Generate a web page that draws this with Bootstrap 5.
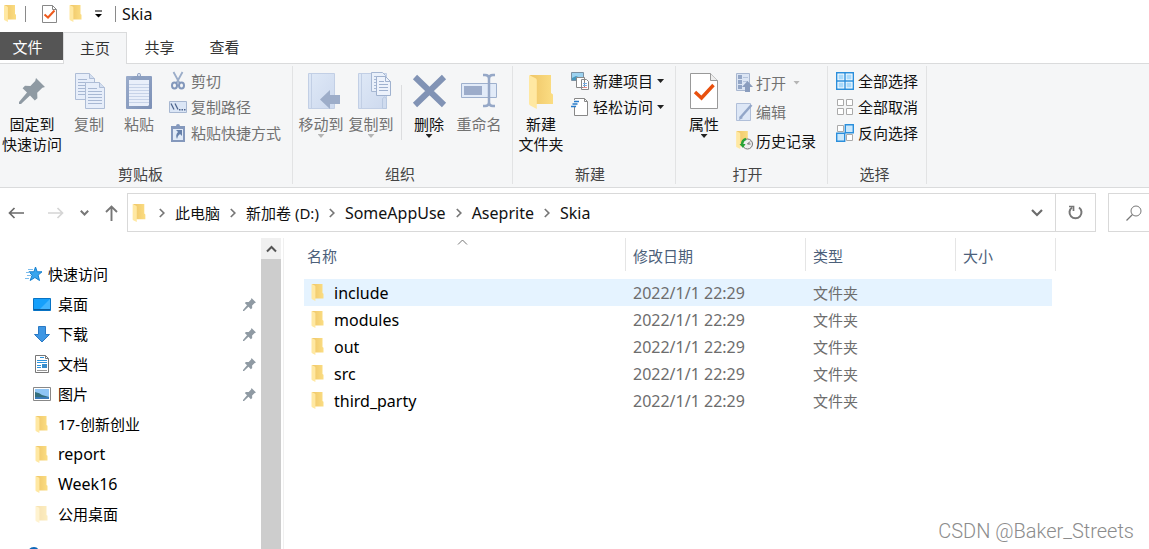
<!DOCTYPE html>
<html lang="zh-CN">
<head>
<meta charset="utf-8">
<meta name="viewport" content="width=device-width, initial-scale=1">
<title>Skia</title>
<link href="https://cdn.jsdelivr.net/npm/bootstrap@5.3.0/dist/css/bootstrap.min.css" rel="stylesheet">
<style>
  body { font: 15px/20px "Noto Sans", "Noto Sans CJK SC", sans-serif; color: #111; background: #fff; }
  button { background: none; border: 0; padding: 0; color: inherit; white-space: nowrap; }
  a { color: inherit; text-decoration: none; }
  svg { display: block; flex: none; }
  .latin { font-size: 16px; }

  .titlebar { height: 32px; padding: 0 0 5px 3px; }
  .titlebar .latin { margin-left: 6px; }
  .bar-sep { width: 1px; height: 16px; background: #8a8a8a; }
  .more { margin: 0 12px 0 4px; }

  .tabs { height: 32px; border-bottom: 1px solid #dadbdc; }
  .tabs a { width: 65px; height: 32px; line-height: 30px; text-align: center; color: #333; }
  .tabs .file-tab { width: 63px; height: 28px; padding-right: 8px; background: #555; color: #fff; }
  .tabs .current { width: 64px; background: #f5f6f7; border: 1px solid #dadbdc; border-bottom: 0; }

  .ribbon { height: 124px; background: #f5f6f7; border-bottom: 1px solid #dadbdc; }
  .group { border-right: 1px solid #e2e3e4; margin: 2px 0 3px; padding: 2px 11px 0 3px; }
  .group.first { padding-left: 0; }
  .group.snug { padding-right: 8px; }
  .group-name { color: #444; text-align: center; }
  .group-body { height: 96px; }
  .big { width: 50px; padding-top: 4px; display: flex; flex-direction: column; align-items: center; }
  .big svg.pic { margin-bottom: 2px; }
  .pin-btn { width: 64px; }
  .stack { display: flex; flex-direction: column; align-items: flex-start; padding-left: 5px; }
  .stack button { display: flex; align-items: center; gap: 4px; height: 26px; }
  .stack.loose { padding-left: 7px; }
  .stack.loose button { height: 29px; gap: 3px; }
  .off { color: #727272; }
  .caret { width: 7px; height: 4px; background: #222; clip-path: polygon(0 0, 100% 0, 50% 100%); }
  .off .caret { background: #b5b5b5; }
  .inner-sep { width: 1px; height: 55px; margin: 17px 2px 0 5px; background: #dcdddf; }

  .address-row { height: 50px; padding-top: 5px; }
  .field { height: 39px; border: 1px solid #d9d9d9; }
  .nav-keys { width: 127px; height: 39px; padding: 0 9px 0 8px; }
  .crumbs { padding: 0 12px 0 4px; }
  .chev { margin: 0 2px; }
  .chev.lead-chev { margin-left: 5px; }
  .refresh { width: 40px; height: 37px; border-left: 1px solid #d9d9d9; }
  .search { width: 41px; margin-left: 12px; border-right: 0; padding-left: 17px; overflow: hidden; }
  .search input { border: 0; width: 4px; padding: 0; }

  .tree { width: 261px; padding-top: 21px; }
  .tree a { display: flex; align-items: center; height: 30px; padding: 0 5px 0 33px; color: #000; }
  .tree a.root { padding-left: 24px; gap: 5px; }
  .tree a > svg:first-child { margin-right: 7px; }
  .tree a.root > svg:first-child { margin-right: 0; }
  .tree .pinned { margin-left: auto; }
  .tree a.cloud { margin-top: 10px; }
  .track { width: 20px; background: #cdcdcd; margin-right: 2px; }
  .track button { width: 20px; height: 21px; background: #f0f0f0; }
  .pane { border-left: 1px solid #f0f0f0; padding-left: 20px; }

  .files { table-layout: fixed; width: 752px; border-collapse: separate; border-spacing: 0; }
  .files th { position: relative; height: 33px; font-weight: 400; color: #4c607a; border-right: 1px solid #e5e5e5; padding: 2px 0 0 7px; }
  .files th:first-child { padding-left: 3px; }
  .files td { height: 27px; padding: 0 0 0 7px; color: #6d6d6d; }
  .files td:first-child { color: #000; padding-left: 5px; }
  .files td:last-child { border-right: 4px solid #fff; }
  .files tr.gap td { height: 8px; }
  .files tr.hot td { background: #e5f3ff; }
  .item { display: flex; align-items: center; gap: 7px; }
  .sort { position: absolute; left: 153px; top: 1px; }
  .watermark { position: absolute; right: 15px; bottom: 8px; font: 300 20px/20px Roboto, sans-serif; color: #8c8c8c; }
</style>
</head>
<body>
<svg width="0" height="0" class="position-absolute" aria-hidden="true">
  <linearGradient id="fold" x1="0" x2="1"><stop offset="0" stop-color="#efc668"/><stop offset="1" stop-color="#fbdd83"/></linearGradient>
  <linearGradient id="blue" x1="0" y1="0" x2="1" y2="1"><stop offset="0" stop-color="#dfe9f7"/><stop offset="1" stop-color="#cdd9ee"/></linearGradient>
  <linearGradient id="clip" x1="0" y1="0" x2="1" y2="1"><stop offset="0" stop-color="#9aaccb"/><stop offset="1" stop-color="#7c90b6"/></linearGradient>
  <symbol id="folder" viewBox="0 0 12 17"><path fill="url(#fold)" d="M.5 0H11v9l1 .8v4.700H3z"/><path fill="#ffe8a2" d="M0 0l3.300 1.600q.6.300.6 1V17L.6 15.300Q0 15 0 14.300z"/></symbol>
  <symbol id="pin" viewBox="0 0 13 13"><path fill="#8f9aa3" d="M8.500 0L13 4.500l-1.300.4-2.600 2.500.1 2.700-1.300 1.100-2.400-2.400L1 13H0v-1l4-4.700-2.200-2.200L3 3.900l2.700.1L8.100 1.500z"/></symbol>
  <symbol id="sheet" viewBox="0 0 20 27"><path fill="#e7eefa" stroke="#aebdd6" d="M.5.500h14l5 5v21H.5z"/><path fill="#d4dff0" stroke="#aebdd6" d="M14.500.5v5h5"/><path stroke="#a8b8d3" stroke-width="1" d="M3 6.500h9M3 9.500h14M3 12.500h14M3 15.500h14M3 18.500h14M3 21.500h14"/></symbol>
  <symbol id="crumb" viewBox="0 0 6 10"><path fill="none" stroke="#777" stroke-width="1.700" d="M.8 1l4 4-4 4"/></symbol>
  <symbol id="checked" viewBox="0 0 28 36"><path fill="#fff" stroke="#999" d="M.5.500h20l7 7v28H.5z"/><path fill="#eee" stroke="#999" d="M20.500.5v7h7"/><path fill="none" stroke="#e8500e" stroke-width="3.400" d="M5 19l6.500 6L23.500 12"/></symbol>
</svg>

<div class="vh-100 d-flex flex-column overflow-hidden position-relative">
  <header class="titlebar d-flex align-items-center flex-shrink-0">
    <svg width="14" height="17"><use href="#folder" width="14" height="17"/></svg>
    <span class="bar-sep ms-2 me-3"></span>
    <button aria-label="属性" class="me-2"><svg width="15" height="18" viewBox="0 0 15 18"><path fill="#fff" stroke="#888" d="M.5.500h10l4 4v13H.5z"/><path fill="none" stroke="#888" d="M10.500.5v4h4"/><path fill="none" stroke="#ee5a1c" stroke-width="2" d="M2.500 9.500L6 12.500l6.500-7"/></svg></button>
    <button aria-label="新建文件夹" class="ms-1 me-2"><svg width="13" height="17"><use href="#folder" width="13" height="17"/></svg></button>
    <button aria-label="自定义快速访问工具栏" class="more"><svg width="9" height="8" viewBox="0 0 9 8"><path d="M1 .5h7v1H1zM1 4h7L4.500 7.500z"/></svg></button>
    <span class="bar-sep"></span>
    <span class="latin">Skia</span>
  </header>

  <nav class="tabs d-flex flex-shrink-0">
    <a href="#" class="file-tab">文件</a>
    <a href="#" class="current">主页</a>
    <a href="#">共享</a>
    <a href="#">查看</a>
  </nav>

  <section class="ribbon d-flex flex-shrink-0">
    <div class="group first">
      <div class="group-body d-flex align-items-start">
        <button class="big pin-btn"><svg class="pic" width="40" height="40" viewBox="0 0 40 40"><use href="#pin" x="7" y="6" width="26" height="26"/></svg><span>固定到</span><span>快速访问</span></button>
        <button class="big off"><svg class="pic" width="40" height="40" viewBox="0 0 40 40"><use href="#sheet" x="6" y="1" width="20" height="27"/><use href="#sheet" x="16" y="10" width="20" height="27"/></svg><span>复制</span></button>
        <button class="big off"><svg class="pic" width="40" height="40" viewBox="0 0 40 40"><rect x="7" y="4" width="26" height="33" rx="1" fill="url(#clip)"/><path fill="#e9effa" d="M10 8h20v25l-1 1H10z"/><path stroke="#c7d3e8" d="M10 12.500h20M10 15.500h20M10 18.500h20M10 21.500h20M10 24.500h20M10 27.500h20M10 30.500h20"/><path fill="#8c9fc0" d="M12 8V6l4-2h2q0-3 2-3t2 3h2l4 2v2z"/><circle cx="20" cy="3" r="1" fill="#e9effa"/></svg><span>粘贴</span></button>
        <div class="stack off">
          <button><svg width="18" height="20" viewBox="0 0 18 20"><path fill="none" stroke="#9badc9" stroke-width="1.800" d="M4.500 1l6 11M13.500 1l-6 11"/><ellipse cx="5.500" cy="14.500" rx="2.500" ry="3" fill="none" stroke="#8297bb" stroke-width="2"/><ellipse cx="12.500" cy="14.500" rx="2.500" ry="3" fill="none" stroke="#8297bb" stroke-width="2"/></svg>剪切</button>
          <button><svg width="18" height="12" viewBox="0 0 18 12"><path fill="#dbe6f6" stroke="#a7b7d1" d="M.5.500h17v11H.5z"/><path stroke="#4d648e" stroke-width="1.300" d="M2 2.500l3 6M6 2.500l3 6"/><path fill="#4d648e" d="M10 8h1.500v1.500H10zM12.500 8H14v1.500h-1.500zM15 8h1.500v1.500H15z"/></svg>复制路径</button>
          <button><svg width="18" height="20" viewBox="0 0 18 20"><path fill="#8498bc" d="M2 3h5q0-2 2-2t2 2h5v16H2z"/><path fill="#e1eaf7" d="M4 6h10v11H4z"/><path fill="#6680aa" d="M7 7h6v6l-2-2q-3 2-3 5-2-4 1-7z"/></svg>粘贴快捷方式</button>
        </div>
      </div>
      <div class="group-name">剪贴板</div>
    </div>

    <div class="group snug">
      <div class="group-body d-flex align-items-start">
        <button class="big off"><svg class="pic" width="40" height="40" viewBox="0 0 40 40"><path fill="url(#blue)" stroke="#c2cfe5" d="M7.500 1.500h26v35h-26z"/><path stroke="#c2cfe5" d="M10.500 2v34"/><path fill="#9dadc9" d="M19 27.500L29 18v5h10v9H29v5z"/></svg><span>移动到</span><span class="caret"></span></button>
        <button class="big off"><svg class="pic" width="40" height="40" viewBox="0 0 40 40"><path fill="url(#blue)" stroke="#c2cfe5" d="M7.500 1.500h28v35h-28z"/><path stroke="#c2cfe5" d="M10.500 2v34"/><path fill="#e9f0fa" stroke="#a6b7d2" d="M20.500.5h11l3 3v16h-14z"/><path stroke="#a9b9d4" d="M23 4.500h6M23 7.500h4M23 10.500h4M23 13.500h4M23 16.500h4"/><path fill="#edf2fb" stroke="#a0b2cf" d="M25.500 4.500h9l5 5v14h-14z"/><path fill="none" stroke="#a0b2cf" d="M34.500 4.500v5h5"/><path stroke="#9fb1cf" d="M28 9.500h5M28 12.500h9M28 15.500h9M28 18.500h9"/><path fill="#cfdbee" stroke="#b8c8e0" d="M31.500 36.500v-10q2-3 4 0v10z"/></svg><span>复制到</span><span class="caret"></span></button>
        <span class="inner-sep"></span>
        <button class="big"><svg class="pic" width="40" height="40" viewBox="0 0 40 40"><path fill="none" stroke="#8193b5" stroke-width="6" d="M6 5l29 28M35 5L6 33"/></svg><span>删除</span><span class="caret"></span></button>
        <button class="big off"><svg class="pic" width="40" height="40" viewBox="0 0 40 40"><path fill="#e2ebf8" stroke="#9eb0cd" d="M2.500 11.500h35v14h-35z"/><path fill="#9cacca" d="M5 14h18v9H5z"/><path fill="none" stroke="#96a8c7" stroke-width="2.500" d="M24 3h2q4 0 4 4v23q0 4-4 4h-2M36 3h-2q-4 0-4 4v23q0 4 4 4h2"/></svg><span>重命名</span></button>
      </div>
      <div class="group-name">组织</div>
    </div>

    <div class="group">
      <div class="group-body d-flex align-items-start">
        <button class="big"><svg class="pic" width="40" height="40" viewBox="0 0 40 40"><use href="#folder" x="8" y="3" width="24" height="34"/></svg><span>新建</span><span>文件夹</span></button>
        <div class="stack">
          <button><svg width="18" height="18" viewBox="0 0 18 18"><path fill="#9cd2f0" stroke="#7b91a3" d="M.5.500h12v8H.5z"/><path fill="#4797bd" d="M1 6l4-2 7 3v1H1z"/><path fill="#fff" stroke="#888" d="M5.500 5.500h8v10h-8zM10.500 7.500h5l2 2v8h-7z"/><path stroke="#77aee6" d="M12 11.500h4M12 13.500h4"/><path stroke="#e58e8e" d="M12 15.500h4"/></svg>新建项目<span class="caret"></span></button>
          <button><svg width="18" height="18" viewBox="0 0 18 18"><path fill="#fff" stroke="#888" d="M3.500.500h10l3 3v14h-13z"/><path fill="none" stroke="#888" d="M13.500.5v3h3"/><path fill="#f5f6f7" d="M2 2h4v7H2z"/><path stroke="#287dcc" stroke-width="1.500" d="M3 3.500h5M1.500 6h5M0 8.500h5"/></svg>轻松访问<span class="caret"></span></button>
        </div>
      </div>
      <div class="group-name">新建</div>
    </div>

    <div class="group">
      <div class="group-body d-flex align-items-start">
        <button class="big"><svg class="pic" width="40" height="40" viewBox="0 0 40 40"><use href="#checked" x="6" y="1" width="28" height="36"/></svg><span>属性</span><span class="caret"></span></button>
        <div class="stack loose">
          <button class="off"><svg width="17" height="19" viewBox="0 0 17 19"><path fill="#dbe5f4" stroke="#a8b7d0" d="M.5.500h13v17H.5z"/><path fill="#93a6c6" d="M2 2h4v4H2zM2 7h4v4H2zM2 12h4v4H2z"/><path stroke="#b5c4dc" d="M7 4.500h5M7 8.500h5"/><path fill="#8a9dbe" d="M11.500 8L17 14h-3v5H9v-5H6z"/></svg>打开<span class="caret ms-1"></span></button>
          <button class="off"><svg width="17" height="18" viewBox="0 0 17 18"><path fill="#dde7f6" stroke="#b0bfd9" d="M.5.500h14v17H.5z"/><path fill="none" stroke="#92a6c8" stroke-width="2.500" d="M4 15L15.500 2"/><path fill="#92a6c8" d="M3 17l1-4 3 2z"/></svg>编辑</button>
          <button><svg width="17" height="19" viewBox="0 0 17 19"><use href="#folder" x="0" y="0" width="13" height="18"/><circle cx="11.500" cy="13" r="5" fill="#eee" stroke="#777"/><path fill="none" stroke="#666" d="M11.500 13l2.500-2.500M11.500 13h3"/><path fill="none" stroke="#27a338" stroke-width="2.500" d="M10 8q-4 1-4 6"/><path fill="#27a338" d="M3.500 13h6L7 17z"/></svg>历史记录</button>
        </div>
      </div>
      <div class="group-name">打开</div>
    </div>

    <div class="group snug">
      <div class="group-body d-flex align-items-start">
        <div class="stack">
          <button><svg width="18" height="18" viewBox="0 0 18 18"><path fill="#fff" stroke="#2b8fdc" stroke-width="1.400" d="M.7.700h8.300v8.300H.7zM9 .7h8.300V9H9zM.7 9H9v8.300H.7zM9 9h8.300v8.300H9z"/><path fill="#a9dafb" d="M2.500 2.500h5v5h-5zM10.500 2.500h5v5h-5zM2.500 10.500h5v5h-5zM10.500 10.500h5v5h-5z"/></svg>全部选择</button>
          <button><svg width="18" height="18" viewBox="0 0 18 18"><path fill="#fff" stroke="#aaa" d="M1.500 1.500h6v6h-6zM10.500 1.500h6v6h-6zM1.500 10.500h6v6h-6zM10.500 10.500h6v6h-6z"/></svg>全部取消</button>
          <button><svg width="18" height="18" viewBox="0 0 18 18"><path fill="#fff" stroke="#aaa" d="M1.500 1.500h6v6h-6zM10.500 10.500h6v6h-6z"/><path fill="#cbe8fc" stroke="#2b8fdc" stroke-width="1.400" d="M9.300.7h8v8h-8zM.7 9.300h8v8h-8z"/></svg>反向选择</button>
        </div>
      </div>
      <div class="group-name">选择</div>
    </div>
  </section>

  <div class="address-row d-flex flex-shrink-0">
    <div class="nav-keys d-flex align-items-center justify-content-between flex-shrink-0">
      <button aria-label="返回"><svg width="16" height="12" viewBox="0 0 16 12"><path fill="none" stroke="#6a6a6a" stroke-width="1.700" d="M16 6H2M6.500 1L1.500 6l5 5"/></svg></button>
      <button aria-label="前进" class="ms-2"><svg width="16" height="12" viewBox="0 0 16 12"><path fill="none" stroke="#d5d5d5" stroke-width="1.700" d="M0 6h14M9.500 1l5 5-5 5"/></svg></button>
      <button aria-label="最近浏览的位置"><svg width="9" height="6" viewBox="0 0 9 6"><path fill="none" stroke="#777" stroke-width="2" d="M.8.800l3.700 3.700L8.200.8"/></svg></button>
      <button aria-label="上移"><svg width="13" height="16" viewBox="0 0 13 16"><path fill="none" stroke="#777" stroke-width="1.900" d="M6.500 16V2M1 7l5.500-5.500L12 7"/></svg></button>
    </div>
    <div class="field flex-grow-1 d-flex align-items-center">
      <nav class="crumbs d-flex align-items-center flex-grow-1 gap-2">
        <svg width="14" height="18"><use href="#folder" width="14" height="18"/></svg>
        <svg width="6" height="10" class="chev lead-chev"><use href="#crumb"/></svg>
        <a href="#">此电脑</a>
        <svg width="6" height="10" class="chev"><use href="#crumb"/></svg>
        <a href="#">新加卷 (D:)</a>
        <svg width="6" height="10" class="chev"><use href="#crumb"/></svg>
        <a href="#" class="latin">SomeAppUse</a>
        <svg width="6" height="10" class="chev"><use href="#crumb"/></svg>
        <a href="#" class="latin">Aseprite</a>
        <svg width="6" height="10" class="chev"><use href="#crumb"/></svg>
        <a href="#" class="latin">Skia</a>
        <button class="ms-auto" aria-label="以前的位置"><svg width="12" height="8" viewBox="0 0 12 8"><path fill="none" stroke="#6c6c6c" stroke-width="2.200" d="M1 1l5 5 5-5"/></svg></button>
      </nav>
      <button class="refresh d-flex align-items-center justify-content-center" aria-label="刷新"><svg width="15" height="15" viewBox="0 0 15 15"><path fill="none" stroke="#777" stroke-width="2" d="M11 2.500a6 6 0 1 1-7 0"/><path fill="none" stroke="#777" stroke-width="1.700" d="M1 1.500h4.500V6"/></svg></button>
    </div>
    <label class="field search d-flex align-items-center flex-shrink-0"><svg width="16" height="16" viewBox="0 0 16 16"><circle cx="10" cy="6" r="5" fill="none" stroke="#777"/><path stroke="#777" stroke-width="1.200" d="M6.500 9.500L.5 15.500"/></svg><input type="search" aria-label="搜索 Skia"></label>
  </div>

  <main class="d-flex flex-grow-1 overflow-hidden">
    <nav class="tree flex-shrink-0">
      <a href="#" class="root"><svg width="19" height="16" viewBox="0 0 19 16"><path fill="#37a5ee" stroke="#1480cf" d="M11.500 1l1.700 4.800H18l-3.900 3.300 1.400 5.400-4.600-3-4.700 3 1.900-5.300L5 5.800h4.900z"/><path stroke="#7bbcec" d="M4 3.500h5M2 6.500h4M3 9.500h4M1 12.500h4"/></svg>快速访问</a>
      <a href="#"><svg width="18" height="13" viewBox="0 0 18 13"><path fill="#16a0fb" stroke="#0873c4" d="M.5.500h17v12H.5z"/><path fill="#42b5ff" d="M17 1v10H7z"/><path fill="#0b5c9c" d="M1 11h16v1H1z"/></svg>桌面<svg class="pinned" width="13" height="13"><use href="#pin"/></svg></a>
      <a href="#"><svg width="18" height="17" viewBox="0 0 18 17"><path fill="#3e97e4" stroke="#2a79c4" d="M5.500.500h7v8h4L9 16 1.500 8.500h4z"/></svg>下载<svg class="pinned" width="13" height="13"><use href="#pin"/></svg></a>
      <a href="#"><svg width="18" height="18" viewBox="0 0 18 18"><path fill="#fff" stroke="#777" d="M2.500.500h10l3 3v14h-13z"/><path fill="none" stroke="#777" d="M12.500.5v3h3"/><path stroke="#2d93db" d="M7 2.500h4M4 5.500h10M4 7.500h10M4 10.500h4M4 12.500h4"/><path fill="#378dcc" d="M9 9h5v4H9z"/><path stroke="#999" d="M4 15.500h10"/></svg>文档<svg class="pinned" width="13" height="13"><use href="#pin"/></svg></a>
      <a href="#"><svg width="18" height="14" viewBox="0 0 18 14"><path fill="#fff" stroke="#888" d="M.5.500h17v13H.5z"/><path fill="#8fc5f5" d="M2 2h14v10H2z"/><path fill="#356f7c" d="M2 5q5 1 7 3l7 2H2z"/><path fill="#3a7ab8" d="M2 10h14v2H2z"/></svg>图片<svg class="pinned" width="13" height="13"><use href="#pin"/></svg></a>
      <a href="#"><svg width="18" height="17"><use href="#folder" x="2" width="13" height="17"/></svg>17-创新创业</a>
      <a href="#" class="latin"><svg width="18" height="17"><use href="#folder" x="2" width="13" height="17"/></svg>report</a>
      <a href="#" class="latin"><svg width="18" height="17"><use href="#folder" x="2" width="13" height="17"/></svg>Week16</a>
      <a href="#"><svg width="18" height="17" class="opacity-50"><use href="#folder" x="2" width="13" height="17"/></svg>公用桌面</a>
      <a href="#" class="root cloud"><svg width="19" height="14" viewBox="0 0 19 14"><path fill="#0d67b8" d="M4 13q-4 0-4-4t4-4q1-5 6-5 4 0 5 4 4 1 4 5 0 4-4 4z"/></svg>OneDrive</a>
    </nav>
    <div class="track flex-shrink-0"><button class="d-flex align-items-center justify-content-center" aria-label="向上滚动"><svg width="11" height="8" viewBox="0 0 11 8"><path fill="none" stroke="#555" stroke-width="2" d="M1 6.500L5.500 2 10 6.500"/></svg></button></div>
    <div class="pane flex-grow-1">
      <table class="files">
        <colgroup><col style="width:322px"><col style="width:180px"><col style="width:150px"><col style="width:100px"></colgroup>
        <thead>
          <tr><th>名称<svg class="sort" width="11" height="6" viewBox="0 0 11 6"><path fill="none" stroke="#777" d="M1 5.500L5.500 1 10 5.500"/></svg></th><th>修改日期</th><th>类型</th><th>大小</th></tr>
        </thead>
        <tbody>
          <tr class="gap" aria-hidden="true"><td colspan="4"></td></tr>
          <tr class="hot"><td><div class="item latin"><svg width="18" height="17"><use href="#folder" x="2" width="13" height="17"/></svg>include</div></td><td class="latin">2022/1/1 22:29</td><td>文件夹</td><td></td></tr>
          <tr><td><div class="item latin"><svg width="18" height="17"><use href="#folder" x="2" width="13" height="17"/></svg>modules</div></td><td class="latin">2022/1/1 22:29</td><td>文件夹</td><td></td></tr>
          <tr><td><div class="item latin"><svg width="18" height="17"><use href="#folder" x="2" width="13" height="17"/></svg>out</div></td><td class="latin">2022/1/1 22:29</td><td>文件夹</td><td></td></tr>
          <tr><td><div class="item latin"><svg width="18" height="17"><use href="#folder" x="2" width="13" height="17"/></svg>src</div></td><td class="latin">2022/1/1 22:29</td><td>文件夹</td><td></td></tr>
          <tr><td><div class="item latin"><svg width="18" height="17"><use href="#folder" x="2" width="13" height="17"/></svg>third_party</div></td><td class="latin">2022/1/1 22:29</td><td>文件夹</td><td></td></tr>
        </tbody>
      </table>
    </div>
  </main>
  <div class="watermark">CSDN @Baker_Streets</div>
</div>
<script src="https://cdn.jsdelivr.net/npm/bootstrap@5.3.0/dist/js/bootstrap.bundle.min.js"></script>
</body>
</html>
